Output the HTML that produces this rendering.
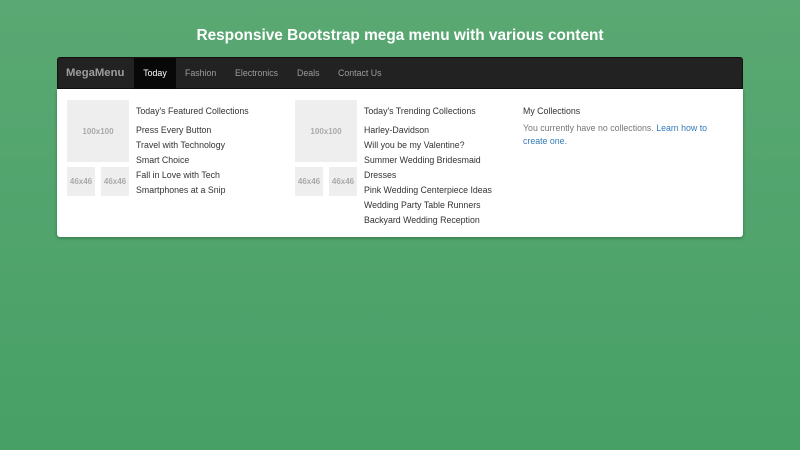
<!DOCTYPE html>
<html><head><style>
body{margin:0;width:800px;height:450px;background:linear-gradient(#5aa873,#47a066);font-family:"Liberation Sans",sans-serif;overflow:hidden;position:relative}
h1{position:absolute;top:27px;left:0;width:800px;text-align:center;margin:0;color:#fff;font-size:15.4px;font-weight:bold}
.nav{position:absolute;left:57px;top:57px;width:686px;height:32px;background:#222;border-radius:3px 3px 0 0;border:1px solid #111;box-sizing:border-box}
.nav span{position:absolute;top:0;height:31px;line-height:31px;font-size:8.8px;color:#9d9d9d}
.brand{font-size:11.3px!important;font-weight:bold}
.panel{position:absolute;left:57px;top:89px;width:686px;height:148px;background:#fff;box-shadow:0 1px 3px rgba(0,0,0,.3);border-radius:0 0 3px 3px}
.ph{position:absolute;background:#eee;color:#aaa;font-size:8px;font-weight:bold;display:flex;align-items:center;justify-content:center}
.t{position:absolute;font-size:8.8px;color:#333;line-height:15px}
.h{position:absolute;font-size:8.8px;color:#333}
</style></head><body>
<h1>Responsive Bootstrap mega menu with various content</h1>
<div class="nav">
<span class="brand" style="left:8px">MegaMenu</span>
<span style="left:76px;width:42px;background:#080808;color:#fff;text-align:center">Today</span>
<span style="left:127px">Fashion</span>
<span style="left:177px">Electronics</span>
<span style="left:239px">Deals</span>
<span style="left:280px">Contact Us</span>
</div>
<div class="panel">
<div class="ph" style="left:10px;top:11px;width:62px;height:62px">100x100</div>
<div class="ph" style="left:10px;top:78px;width:28px;height:29px">46x46</div>
<div class="ph" style="left:44px;top:78px;width:28px;height:29px">46x46</div>
<div class="h" style="left:79px;top:17px">Today's Featured Collections</div>
<div class="t" style="left:79px;top:34px">Press Every Button<br>Travel with Technology<br>Smart Choice<br>Fall in Love with Tech<br>Smartphones at a Snip</div>
<div class="ph" style="left:238px;top:11px;width:62px;height:62px">100x100</div>
<div class="ph" style="left:238px;top:78px;width:28px;height:29px">46x46</div>
<div class="ph" style="left:272px;top:78px;width:28px;height:29px">46x46</div>
<div class="h" style="left:307px;top:17px">Today's Trending Collections</div>
<div class="t" style="left:307px;top:34px">Harley-Davidson<br>Will you be my Valentine?<br>Summer Wedding Bridesmaid<br>Dresses<br>Pink Wedding Centerpiece Ideas<br>Wedding Party Table Runners<br>Backyard Wedding Reception</div>
<div class="h" style="left:466px;top:17px">My Collections</div>
<div class="t" style="left:466px;top:33px;width:190px;color:#777;line-height:12.5px">You currently have no collections. <span style="color:#337ab7">Learn how to create one.</span></div>
</div>
</body></html>
